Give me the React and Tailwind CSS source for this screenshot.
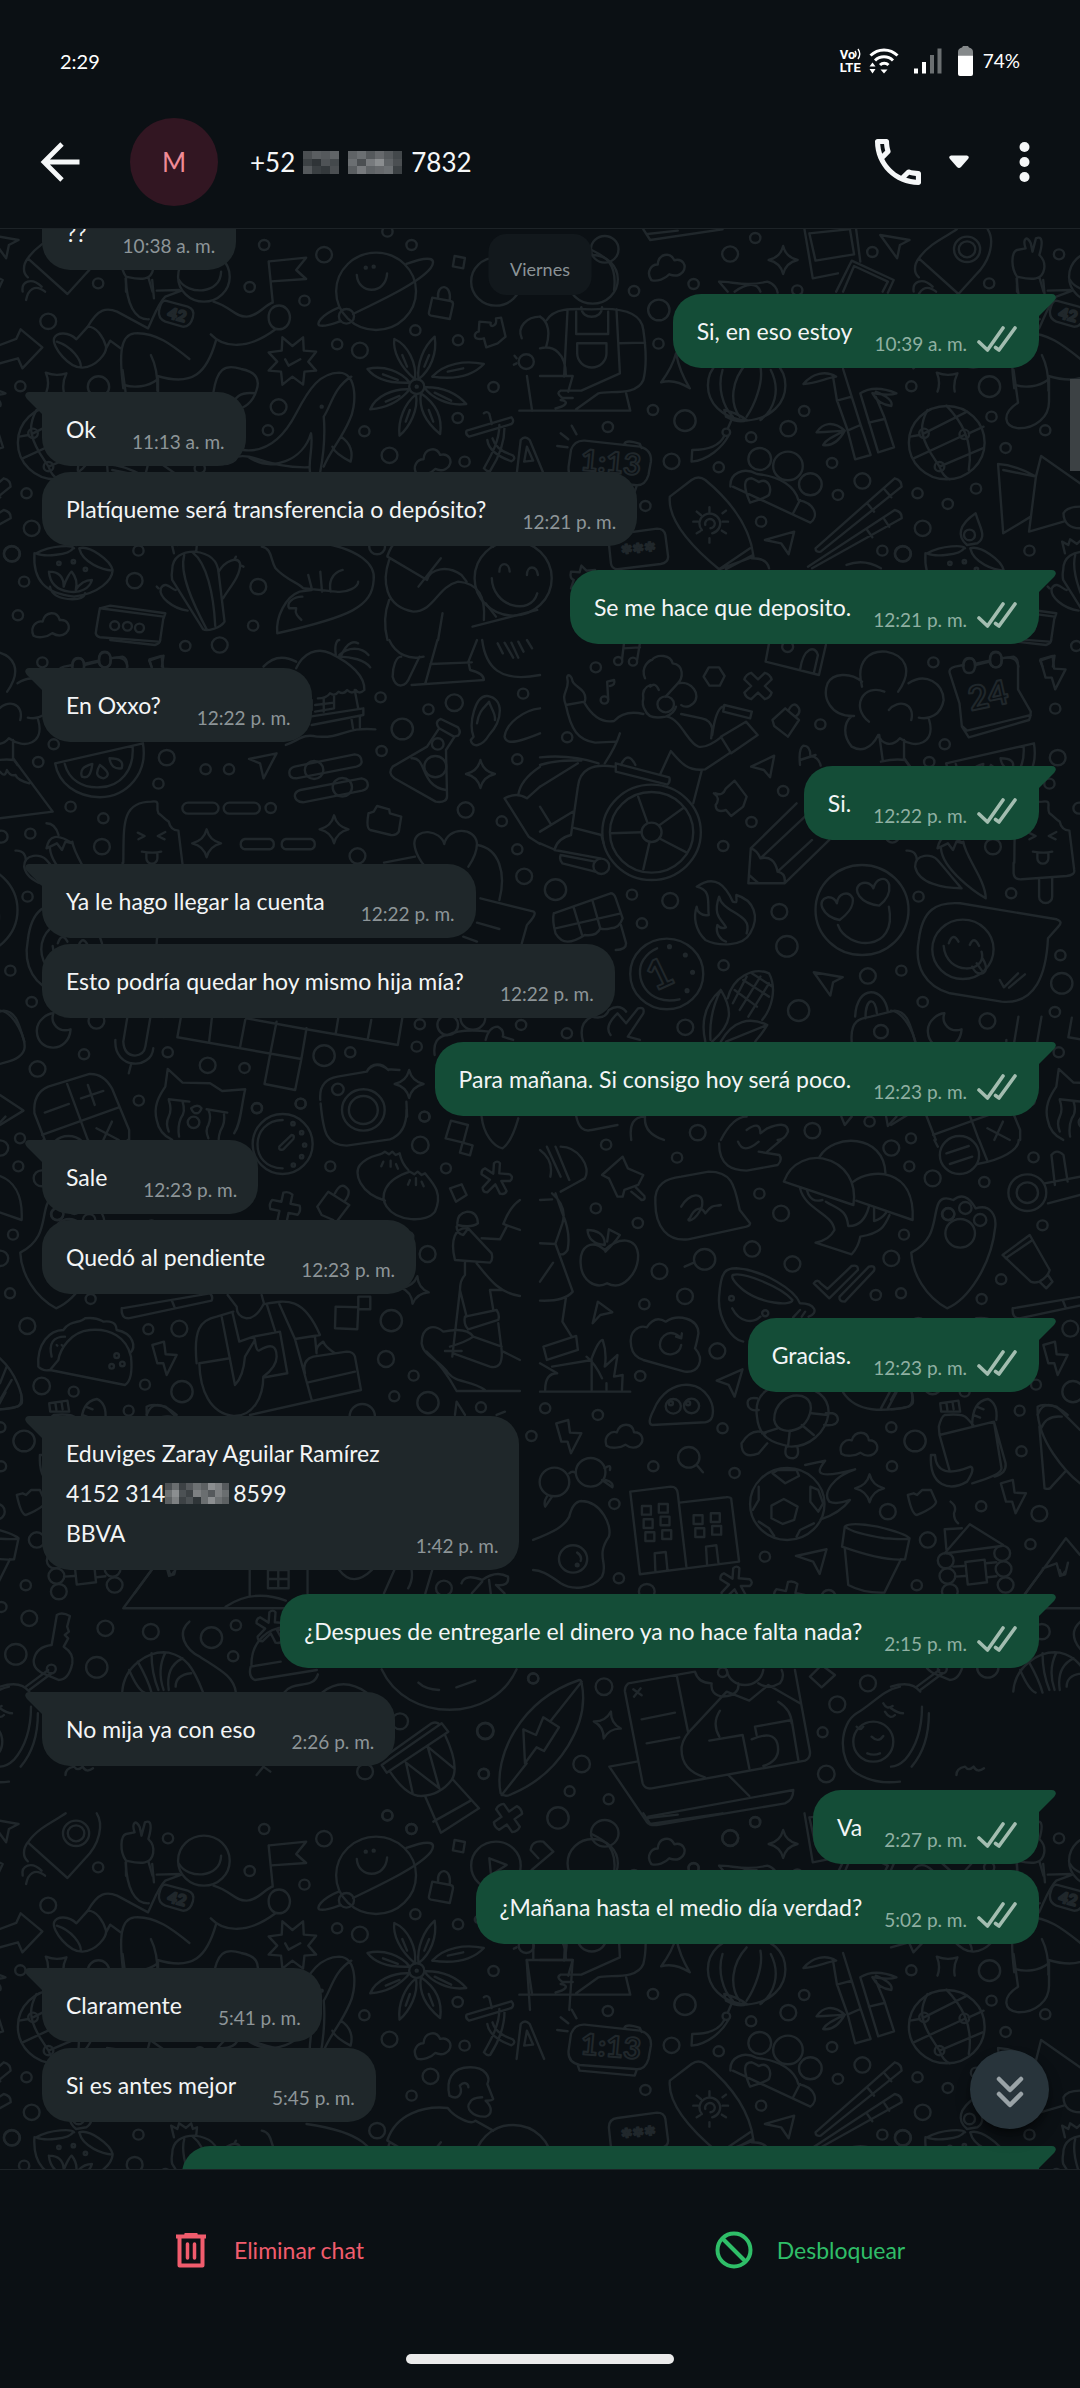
// Small shapes that are scattered over the wallpaper more than once.
const SPARK = 'M0 -42Q8 -8 42 0Q8 8 0 42Q-8 8 -42 0Q-8 -8 0 -42Z';
const BOLT = 'M-35 -40L0 -50L5 -12L38 -10L8 50L-2 15L-20 15Z';
const CLOUD = 'M-50 25C-60 -5 -35 -20 -20 -15C-10 -45 25 -45 30 -15C55 -15 62 10 45 25C30 35 15 30 5 22C-10 32 -35 35 -50 25Z';
const PLUS = 'M-14 -42q14 -8 28 0V-14H42q8 14 0 28H14V42q-14 8 -28 0V14H-42q-8 -14 0 -28H-14Z';
const ASTER = 'M-8 -45q10 -10 18 0L8 -15L40 -12q12 10 0 20L14 8L30 38q-5 12 -20 8L-4 18L-28 42q-14 0 -14 -14L-20 4L-45 -12q-2 -14 10 -18L-10 -14Z';

// The wallpaper tile is split in sheets; every sheet has its own origin and unit.
const SHEETS = [
  {
    transform: 'translate(0 220) scale(.3444 .3333)',
    circles: [
      [767, 75], [1125, 35], [1195, 75], [941, 104, 23], [285, 190], [725, 201], [884, 242], [140, 304, 23], [1206, 331],
      [1330, 361], [979, 373], [1045, 391, 23], [59, 499], [286, 500, 31], [809, 561, 23], [778, 631], [1433, 501],
      [1329, 594], [1058, 634], [1131, 706, 23], [1349, 725], [77, 820], [92, 925, 23], [35, 1002, 23], [402, 992],
      [391, 1082, 23], [70, 1085], [750, 1100, 23], [52, 1186], [735, 1217], [1095, 980, 23], [580, 745],
      [1092, 214, 116], [1006, 289, 22], [1062, 143, 3], [1085, 140, 3], [592, 170, 75], [1210, 500, 22], [1210, 500, 3],
      [934, 560, 3], [171, 1030, 5], [213, 1025, 5], [248, 1048, 5], [1490, 1075, 112], [333, 1217, 13], [370, 1219, 13],
      [405, 1224, 13], [1440, 185, 72], [1528, 425, 22], [1250, 817, 23], [1195, 875],
    ],
    paths: [
      'M1180 132C1250 105 1270 115 1250 145C1220 185 1120 235 1025 282M985 262C930 285 915 315 930 317C950 320 970 310 990 303M1036 165C1040 225 1120 225 1124 160',
      'M782 124L889 113L860 150L889 177L788 184M780 124L792 248M780 292C780 245 840 245 842 292C840 340 780 340 780 292',
      'M520 180C545 225 640 225 642 155M365 175C368 250 390 300 432 298M442 180L447 235M255 320C285 265 310 262 340 275L430 325C450 280 460 250 480 230L527 212M455 212L520 210M620 245C670 260 680 290 715 290C745 290 765 260 790 248M612 343C650 385 720 390 800 328',
      'M358 505C345 400 350 345 390 340C450 335 500 375 550 417M438 405C455 440 458 480 457 512M457 468C560 500 600 460 627 362M360 495C390 505 430 500 455 480',
      'M255 320L222 358C200 335 165 335 157 355C150 380 200 445 240 443C280 440 310 400 308 380C300 350 280 320 255 320M165 365C210 380 235 420 235 440M308 385L320 362L350 385',
      'M480 242L545 260Q567 268 560 292Q552 322 530 320L480 305Q458 295 462 270Q468 242 480 242Z',
      'M0 375L47 357L60 328L123 382L65 445L52 415L0 430',
      'M1255 233L1308 243Q1317 245 1315 255L1306 297L1252 287Q1243 285 1246 275ZM1272 232C1268 190 1312 190 1306 240',
      'M1320 108L1350 114L1345 145L1315 139ZM1392 305L1425 308C1420 325 1445 320 1440 295L1455 293L1468 350L1445 370L1412 382L1405 355C1370 365 1375 335 1390 335Z',
      'M820 352L849 378L880 352L882 392L918 395L895 425L918 452L884 455L880 494L849 470L820 494L816 455L780 452L805 425L780 397L818 392ZM828 418L838 437L872 418',
      'M1205 478C1160 440 1140 390 1145 357C1185 375 1210 430 1205 478M1215 478C1210 430 1230 380 1262 350C1270 400 1250 450 1215 478M1255 470C1290 430 1350 420 1405 432C1370 470 1320 480 1255 470M1232 502C1290 500 1330 525 1354 552C1300 560 1250 530 1232 502',
      'M1222 520C1265 550 1285 590 1278 642C1240 610 1215 570 1222 520M1208 523C1215 570 1190 620 1160 647C1155 600 1175 550 1208 523M1190 508C1160 545 1120 565 1075 568C1090 530 1140 505 1190 508M1190 488C1150 490 1095 485 1067 447C1115 435 1165 455 1190 488',
      'M1168 405L1182 440M1246 405L1232 440M1300 455L1345 445M1262 518L1310 542M1245 570L1258 605M1190 570L1178 605M1120 545L1160 528M1112 463L1155 480',
      'M133 458Q162 470 193 460Q180 487 185 515M133 458Q145 487 135 515M620 515C630 450 650 430 700 447C745 455 755 480 745 510C735 545 710 570 665 573M675 570C675 530 700 515 740 520',
      'M705 690C780 700 830 640 860 580C900 500 930 460 985 458C1040 460 1035 560 1015 600C990 660 960 690 940 740M1020 470C970 500 960 560 940 590C945 650 940 700 930 755M685 605C710 620 715 655 705 690C690 685 660 695 632 732C660 735 680 730 690 710C740 700 780 745 895 742M720 710C790 760 880 720 903 640C910 680 895 720 900 755M990 650C1020 670 1025 700 1018 725C990 710 970 695 965 680M685 605C680 650 665 660 670 690',
      'M1355 632L1485 592q10 12 0 20L1362 650q-12 -8 -7 -18M1405 580q10 -8 16 2L1428 612M1450 615C1450 660 1430 700 1405 745q10 12 18 8C1450 710 1465 670 1465 620M1415 660q5 40 70 64q14 -8 4 -18Q1440 690 1430 655M1500 765L1512 660q12 -15 26 0L1580 765M1522 725L1548 722L1530 680Z',
      'M105 1000C150 975 210 975 215 985M100 1000C95 1080 130 1120 215 1130C290 1120 325 1080 327 1052C300 1050 240 1030 230 985M230 985C260 975 320 1020 327 1050M105 1000C130 1012 200 1005 212 985M142 1055C170 1055 185 1070 185 1100C190 1080 205 1055 208 1055C220 1070 225 1090 220 1110C235 1085 255 1080 267 1080C260 1105 235 1120 200 1115C165 1110 145 1090 142 1055M145 1100C150 1125 170 1137 210 1138C235 1138 245 1130 247 1120',
      'M500 1050C500 1010 530 995 565 995C610 1000 632 1020 635 1060L652 1205C640 1225 600 1235 590 1228L500 1080C498 1070 498 1060 500 1050M535 1005C520 1060 560 1150 600 1228M560 998C600 1030 620 1120 625 1218M545 1172C500 1165 460 1130 467 1105C480 1080 500 1110 510 1110M635 1055C655 1020 690 1010 697 1030C700 1070 660 1110 648 1135M680 1020l5 -10M697 1035l10 5M460 1105l-5 -5M505 1000L497 965L515 975L520 958L540 972L555 958L560 975L572 970L570 992',
      'M760 980C790 985 785 1020 800 1045C830 1080 870 1090 880 1105L975 1115C1010 1120 1040 1100 1040 1085M890 960C1060 985 1090 1040 1085 1080C1080 1160 1020 1190 805 1240C800 1190 830 1130 870 1115L905 1110M895 1065L905 1105M930 1055L935 1115M995 1050C960 1060 955 1090 960 1115M878 1130C850 1130 830 1150 840 1165L860 1165C855 1180 865 1190 875 1200',
      'M1125 1010L1240 1080C1250 1045 1300 1035 1340 1065L1355 1085M1130 1020C1110 1080 1115 1160 1200 1175C1260 1175 1270 1100 1330 1085C1390 1090 1410 1130 1405 1200M1280 1015L1215 1100M1130 1140C1115 1180 1115 1220 1125 1260M1285 1180L1272 1260',
      'M1305 875C1295 830 1310 790 1365 790C1410 790 1425 820 1415 840L1432 885C1430 890 1415 890 1410 890C1430 910 1430 930 1410 938C1370 940 1350 910 1365 895C1370 880 1400 880 1400 880M1305 875C1330 890 1345 870 1335 845C1350 830 1360 840 1360 850M1125 1008C1150 930 1230 905 1300 912M1300 912C1320 940 1370 965 1380 950L1432 980',
      'M1428 1075C1430 1160 1540 1190 1560 1120M1450 1055C1450 1025 1478 1025 1480 1055M1530 1065c0 -30 28 -30 32 0M1372 1220L1560 1170M1410 1150L1440 1190',
      'M290 1165L475 1190L465 1260M290 1165Q282 1210 278 1240Q280 1250 290 1252L460 1265M290 1165L320 1157L480 1180L475 1195',
      'M1515 355C1500 320 1530 290 1568 290M1530 468L1545 572M1500 415l-6 -8M1500 430l-8 4',
    ],
    stamps: [[CLOUD, 1253, 727, -15], [CLOUD, 145, 1218, -5]],
    labels: [['42', 510, 300, 46, 15]],
  },
  {
    transform: 'translate(540 220) scale(.3444 .3333)',
    circles: [
      [625, 54], [552, 102, 23], [446, 192], [273, 213], [747, 211], [965, 96], [345, 270, 31], [344, 371], [328, 570],
      [421, 602, 31], [767, 573], [197, 621], [613, 652], [721, 626, 23], [382, 724, 23], [519, 742], [848, 729],
      [936, 783, 23], [865, 825], [642, 905], [306, 858], [994, 992], [1053, 1001, 23], [1311, 590], [1352, 684],
      [1467, 631], [1266, 806], [1184, 852], [1507, 103], [1240, 88, 38], [1240, 88, 24], [188, 88, 40], [153, 178, 73],
      [541, 637, 11], [1181, 668, 110], [1115, 640, 14], [1232, 643, 14], [1160, 740, 14], [638, 717, 33], [720, 738, 43],
      [785, 793, 33], [1247, 945, 16],
    ],
    paths: [
      'M1100 115L1215 222L1265 165C1310 120 1320 60 1300 28M1100 115C1130 70 1180 50 1210 28M1100 115C1085 135 1085 160 1100 172M1085 215C1080 185 1110 170 1140 200M1095 240C1100 210 1120 190 1150 215',
      'M1385 170C1365 140 1370 95 1385 90L1410 85C1400 55 1415 45 1425 70L1430 95L1440 55C1460 45 1460 70 1450 105C1475 130 1465 170 1440 175C1420 180 1395 172 1385 170M1385 175V215M1450 172L1462 215',
      'M988 45L1073 60L1045 75L1037 115ZM352 487Q385 440 395 400Q405 455 435 505Q390 475 352 487',
      'M768 28L792 175L865 160M782 40L895 28M782 40L800 122L912 103L900 28M918 28L930 125M860 215L905 122L1027 180L1010 218M880 215L912 138L1010 185L995 215M300 28L320 60L530 28M312 42L400 32',
      'M520 185C560 185 600 200 660 185C680 190 690 210 690 218M520 185L545 215M565 215C600 190 630 185 640 215',
      'M150 90C190 110 225 130 215 210M120 262C120 300 180 300 180 262M20 300C40 265 90 265 150 268C230 262 295 275 300 330C310 400 310 440 300 480C280 530 200 510 170 520L105 568M80 270L70 470M105 275V342H198V275M222 268L232 460L120 512H60q-15 8 5 22h30M108 370h85v30a42 42 0 0 1 -85 0zM230 370L305 368M0 468H95L82 515M-60 572H262L250 520M60 540C90 545 70 560 45 565M0 385C40 375 75 400 75 465M0 290c25 15 30 50 18 90',
      'M600 398C450 400 450 590 600 602C750 590 750 400 600 398M530 450C515 500 530 560 560 590M600 430C555 480 550 550 580 590M640 440C650 490 620 560 600 590M670 450C700 510 680 570 640 600M535 570q40 10 65 30q-20 12 -60 -10zM556 600L545 626M535 648C520 680 480 690 442 690L440 725C490 720 530 680 547 648',
      'M850 465L862 540L893 630L915 718L960 705L930 612L905 530L880 447M862 542L905 530M893 632L930 615M765 492C790 460 830 450 860 470C830 475 800 490 765 492M930 520L955 605L982 697L1028 682L1000 592L975 530M955 608L1000 597M930 520C960 500 1000 505 1035 520C1010 530 985 520 965 520M975 515C1010 530 1025 545 1020 558C995 555 975 540 965 520M885 632C850 600 820 610 803 637C830 635 860 635 885 632C850 650 830 660 822 675C850 680 870 660 885 632',
      'M1115 640L1240 575M1160 740L1285 685M1085 715L1232 645M1125 570C1105 610 1100 640 1135 700L1160 740M1180 557C1220 600 1260 660 1245 750M1075 650L1102 645M1245 640L1288 620M1160 740Q1170 770 1190 778',
      'M1375 450L1388 548C1340 580 1345 620 1390 625C1440 625 1478 590 1478 545V475',
      'M1330 732L1345 940L1425 890M1345 750L1440 770L1420 935L1520 905M1440 770L1455 708L1568 790M1330 732Q1380 735 1440 770M1520 880c0 30 20 45 48 45M1520 880q10 -20 48 -20',
      'M130 662L290 680Q325 690 322 725L315 765Q305 800 275 795L115 783Q80 775 83 740L90 690Q100 660 130 662ZM110 785L115 800L275 815L280 800M245 672q5 -15 45 0l5 12M60 640L82 658M92 617L106 643M50 678L80 682',
      'M553 800C550 760 590 740 630 762C700 770 740 800 750 840C800 850 810 890 785 908L560 800M735 880L755 840M610 848C590 800 590 775 615 775C630 780 635 790 638 785C660 775 675 800 665 825C655 835 630 840 610 848',
      'M377 830L440 780Q460 765 480 780C550 840 610 920 620 1010L520 1048C440 980 370 900 377 830M520 1048L610 985M540 1048L618 1005M615 1015q45 0 50 30M480 915a14 14 0 1 1 15 10M470 930a30 30 0 1 1 30 10M492 862V875M492 955v13M445 905h14M530 905h16M455 875l12 10M530 880l10 -8M455 940l10 -6M528 932l12 8',
      'M653 960L738 935L722 1003L700 970ZM1030 775Q1050 780 1050 800L815 995Q800 998 800 985ZM950 850L970 875M1000 808L1020 832M1050 895L790 1045M1050 895Q1052 875 1030 870L778 1040M950 930l15 22M1000 898l14 22',
      'M1240 975C1210 950 1215 915 1265 880C1275 920 1300 950 1270 970ZM890 1035q50 -20 100 10',
      'M225 942L340 926Q360 926 364 945L372 1010Q372 1028 350 1032L225 1048Q208 1046 206 1030L200 970Q200 945 225 942ZM120 1037l15 15l25 -2M120 1037l-5 20l-25 -2q-5 20 8 25l-8 25l20 2',
    ],
    stamps: [[CLOUD, 365, 143, -15], [SPARK, 706, 120, 0]],
    labels: [['1:13', 203, 758, 88, 5], ['***', 290, 1030, 80, -6]],
  },
  {
    transform: 'translate(0 640) scale(.3444 .3333)',
    circles: [
      [538, 18], [638, 15, 23], [123, 67], [156, 313], [111, 366], [484, 353, 23], [460, 431], [205, 500], [300, 535],
      [88, 581], [296, 620, 23], [597, 388], [665, 388], [786, 504], [1105, 172], [1168, 267, 31], [1108, 333], [1244, 208],
      [1319, 188, 25], [1519, 161], [1502, 358], [1352, 510, 23], [1457, 544], [1502, 628], [1522, 709, 23], [1038, 648, 23],
      [80, 770], [30, 992], [92, 1086], [280, 1143, 23], [244, 1243], [109, 1287, 23], [487, 1237], [603, 1276, 23],
      [710, 1284], [941, 1247, 31], [1017, 1237], [1219, 1153], [1210, 1220], [1300, 1155, 30], [1513, 1155], [403, 1382],
      [746, 1405], [873, 1391], [981, 1348, 17], [1233, 1430], [4, 590, 18], [912, 390, 27], [994, 442, 28], [1271, 312, 17],
      [1264, 380, 32], [562, 1447, 17], [1055, 1410, 62], [1055, 1410, 42], [1373, 1133, 36],
    ],
    paths: [
      'M160 370L415 310C430 400 370 470 290 472C220 470 170 430 160 370M188 372C200 420 240 445 290 442C350 440 390 390 385 320M268 372q-40 10 -30 38q25 10 30 -38M290 375q-20 35 10 40q30 -10 -10 -40M318 355q5 35 35 30q10 -30 -35 -30',
      'M723 357L803 340L765 415L755 370ZM855 380L1030 343Q1050 345 1050 365Q1050 375 1035 380L860 415Q840 415 840 398Q840 385 855 380ZM872 450L1050 415Q1068 418 1068 435Q1068 447 1052 452L880 487Q858 485 856 468Q856 455 872 450Z',
      'M546 488h72a16 16 0 0 1 0 33h-72a16 16 0 0 1 0 -33zM666 488h72a16 16 0 0 1 0 33h-72a16 16 0 0 1 0 -33zM711 597h72a16 16 0 0 1 0 31h-72a16 16 0 0 1 0 -31zM830 597h72a16 16 0 0 1 0 31h-72a16 16 0 0 1 0 -31z',
      'M358 668C360 560 350 485 440 485C470 480 450 500 460 520C475 530 480 540 490 545C495 570 510 570 518 572L532 690Q535 705 510 708L380 718Q358 720 356 700V668M400 578l20 10l-18 10M480 576l-22 12l20 10M412 635C440 640 450 640 468 635M425 640V655a16 16 0 0 0 32 0V640M430 720V770a19 19 0 0 0 38 0V715',
      'M135 550q25 0 35 35M135 625q10 -60 75 -15l-20 -5l-10 25l-15 -20zM45 632C70 630 75 650 75 660M70 680C70 640 120 640 135 660C160 690 200 740 205 745C150 745 80 730 70 680M145 625C150 690 250 760 275 775C275 720 215 650 210 605',
      'M765 80q40 -45 95 -15M860 85C880 40 920 20 960 40C1020 70 1060 110 1058 150q-15 15 -25 0q-10 15 -25 0q-10 15 -25 5q-10 15 -25 5q-10 15 -35 15M975 45C970 10 980 0 985 0M985 45C1010 20 1050 20 1070 45M985 50C1020 50 1060 60 1075 82M990 48C1010 0 1030 5 1040 10M905 180V210M915 215L970 205V165M1030 150L1040 205M900 230L1055 205L1055 225L905 255M1020 232L1025 265M1045 230V262M830 315C870 300 880 280 920 290C1000 295 1000 260 1090 268M940 175V215M915 195L970 188',
      'M1275 265q-15 -20 5 -28L1330 262q10 15 0 25L1318 290ZM1275 265L1240 320L1140 380Q1125 400 1145 415L1265 485Q1300 490 1298 465L1295 330L1320 290M1195 355C1240 350 1220 440 1295 450',
      'M1375 290C1360 250 1380 165 1415 168C1465 175 1460 240 1420 285C1400 320 1370 325 1367 300zM1385 250C1390 210 1410 200 1420 185C1425 205 1440 220 1437 240M1465 290C1470 250 1520 210 1568 205M1465 290C1470 320 1520 300 1568 280',
      'M1070 520L1085 515L1095 498L1130 508L1132 520L1165 530L1158 575Q1150 588 1135 585L1075 570Q1062 565 1070 520M1290 612C1300 560 1380 560 1385 610C1385 640 1370 665 1360 680M1290 612C1280 570 1205 560 1203 610C1205 640 1225 670 1235 680M1385 615C1450 625 1470 700 1450 780M1115 668L1205 650M1395 775L1550 815Q1560 822 1530 855L1515 910M1385 848L1450 867M1345 890L1385 905',
      'M1465 475L1535 590L1568 612M1465 475Q1500 455 1530 475L1568 440M1505 465Q1510 420 1568 380M38 355L153 515L0 535M0 395q15 20 20 -5q10 20 25 15q5 15 40 25',
      'M155 1120C145 1150 170 1180 205 1168C200 1240 110 1240 107 1175C105 1140 140 1120 155 1120M370 1130L358 1205Q360 1245 392 1247Q418 1245 422 1220L437 1130M335 1200C330 1290 440 1290 445 1225M380 1275L374 1300',
      'M525 1133L515 1192L875 1257L857 1350L768 1332L785 1240M615 1135L607 1207M712 1140L697 1222M803 1145L785 1240M890 1165L875 1257M715 1135L890 1168L1155 1215L1168 1135M982 1135L975 1180M1078 1140L1068 1197',
      'M100 1420Q95 1360 140 1340L260 1302Q300 1300 325 1345L375 1470V1500M100 1420L130 1500M195 1332L255 1500M122 1485L345 1402M130 1418L200 1392M255 1335L275 1395M235 1375L300 1353M280 1465L345 1500M325 1445L300 1500',
      'M455 1440C445 1400 460 1370 480 1340L487 1287L530 1328L610 1330L645 1353L712 1348C700 1400 700 1450 680 1480M455 1440C460 1470 480 1490 500 1500M490 1378L550 1385M600 1408L660 1418M490 1380q10 30 0 50q-10 20 0 45M530 1385q10 30 -5 50q-10 25 -5 55M605 1410q10 20 0 45q-10 15 0 40M650 1418q5 30 -10 55q-5 15 -5 25M555 1405q20 -15 30 0q-5 15 -15 15q-10 0 -15 -15',
      'M930 1380Q925 1320 980 1310L1065 1295C1080 1265 1110 1270 1125 1288L1160 1290M1180 1385L1182 1430M1068 1290q25 -30 60 0M0 1365L68 1412L0 1455M0 1112C40 1115 80 1200 70 1230C60 1260 20 1265 0 1272',
      'M320 0L450 15Q465 10 465 0M210 80q0 -25 20 -25q15 0 15 25M287 60q0 -25 17 -25q17 0 17 25q0 22 -17 22q-17 0 -17 -22M245 75L287 65M320 55q45 -10 50 25M433 62L475 47L470 80M433 62L440 80',
      'M1130 0C1150 45 1190 60 1230 50M1140 110C1140 80 1150 50 1165 50M1140 110C1150 150 1180 140 1190 110L1218 50M1195 135L1380 122L1405 120Q1405 100 1365 90L1360 65L1385 0M1235 130L1270 0M1250 72L1370 67M1400 0C1410 80 1450 130 1568 105M1445 10l15 30M1465 8l25 45M1485 8l20 45M1505 5l15 30M1530 0l15 25',
      'M1262 1245Q1255 1190 1300 1185Q1340 1165 1420 1175M1410 1200Q1420 1160 1445 1160Q1465 1170 1460 1190L1490 1200',
    ],
    stamps: [[SPARK, 600, 610, 0], [SPARK, 970, 568, 0], [SPARK, 1395, 402, 0], [SPARK, 1188, 1332, 0]],
    labels: [],
  },
  {
    transform: 'translate(540 640) scale(.3444 .3333)',
    circles: [
      [162, 82], [79, 292], [814, 253], [1496, 206], [706, 453], [614, 546], [532, 618], [45, 749, 31], [267, 764],
      [378, 782, 23], [296, 850], [695, 815, 23], [717, 919, 31], [533, 976], [952, 1008, 23], [751, 1112, 31],
      [422, 1162, 23], [78, 1180], [1368, 760], [1511, 946], [1515, 1030, 31], [1495, 1116], [458, 1478, 23],
      [791, 1472, 23], [957, 1445], [187, 180, 11], [227, 63, 12], [270, 65, 12], [365, 193, 24], [324, 577, 143],
      [324, 577, 121], [324, 577, 29], [178, 679, 23], [935, 810, 135], [1228, 928, 89], [368, 1002, 106], [376, 920, 4],
      [422, 945, 4], [443, 997, 4], [427, 1052, 4], [990, 1175, 20], [719, 20, 16],
    ],
    paths: [
      'M490 82L520 82L536 108L522 137L492 137L475 110ZM198 178L195 125L215 120q5 15 -12 18M238 60L245 0M282 60L290 10M242 25L290 22',
      'M305 115C290 80 320 60 325 60C340 40 380 45 385 70C420 75 415 115 400 130L365 170M400 130C440 120 470 165 445 190C430 205 415 200 410 195M320 135q-25 10 -20 40q-5 20 5 35q10 30 60 20q25 -10 30 -30M345 150q-10 -25 -25 -10',
      'M75 195C90 270 110 300 160 308L220 305M130 190C150 225 175 250 215 243C240 215 270 215 300 222M232 280Q220 320 188 370M75 195L130 185C140 150 100 140 95 125C90 100 75 100 80 120C85 150 60 160 75 195M410 222L470 235Q495 240 500 265L497 295M370 230C410 240 430 310 460 320C480 325 510 305 525 292M348 405L380 333C410 370 430 395 480 388L550 340M470 390L445 490M525 290L598 245L632 285L555 340zM500 285Q510 210 530 200M535 195l80 20l-5 20l-78 -20z',
      'M220 370L375 412q5 12 -5 22L220 395zM235 375q20 -45 42 0M285 470L312 548M415 505L345 557M205 580L295 577M425 637L350 597M300 688L318 607M215 380C150 370 115 390 110 440L90 585Q50 595 42 630L175 655M95 563L178 585L185 610M60 645L160 665M65 670L160 695M60 645q-5 15 5 25M0 352C60 345 110 350 170 370M0 375C30 365 80 360 120 362M0 440L110 370M0 500L30 550M0 575L95 515M0 610L45 630',
      'M675 240L712 205L752 240L720 290L680 258ZM722 210q15 -30 30 -5q5 15 -10 25M613 380L680 347L668 412L650 390ZM510 460q20 10 30 -15L565 422L600 470L590 500L555 528L540 510q-30 10 -30 -15q15 -20 -5 -35M755 375q-5 -50 10 -58q20 0 20 30q25 5 30 30M755 360L800 345',
      'M935 140C915 60 960 30 1005 35C1060 45 1085 90 1040 155M1070 130C1120 95 1170 130 1172 180C1165 225 1130 240 1100 233M1130 240C1150 310 1090 330 1045 295C1020 325 990 310 982 285C960 330 930 335 905 320C880 290 880 250 905 228M912 228C840 230 820 170 835 130C850 100 900 95 935 125M955 245C900 200 940 130 1000 155M1013 210C1040 175 1090 190 1078 240M985 285L995 360M1057 300V360M990 365Q1030 355 1060 360L1070 375',
      'M665 10L655 65L810 105L830 15M755 90C765 20 800 15 807 45L795 100M1190 100Q1185 85 1205 80L1230 75M1262 72L1305 62M1340 55L1375 50Q1388 55 1388 75V148L1425 215Q1425 230 1420 240L1245 292L1225 260L1218 190L1190 100M1425 225L1240 272L1225 258M1229 77q0 -23 17 -23q17 0 17 23q0 22 -17 22q-17 0 -17 -22M1307 60q0 -23 17 -23q17 0 17 23q0 22 -17 22q-17 0 -17 -22',
      'M745 490L612 625L605 730L710 730L840 600M640 655L790 510M612 625Q630 630 640 655Q680 645 690 695Q715 700 710 730M690 695L790 600M607 705L635 730',
      'M455 740C500 750 485 790 490 825C470 830 455 815 455 800C445 830 450 870 480 900C520 920 590 920 610 880C640 830 620 780 570 765C570 785 575 790 560 785C540 740 510 700 455 740ZM520 770C500 830 530 840 540 862C525 868 518 860 515 855C508 880 525 900 540 905M520 770C530 820 620 820 600 880',
      'M870 840C820 830 800 780 835 772C855 770 860 785 862 790C865 760 895 750 908 775C912 800 890 825 870 840ZM985 797C930 790 905 750 930 732C950 722 965 735 968 745C975 715 1005 705 1014 735C1018 765 1000 785 985 797ZM865 855C890 930 1040 940 1013 800',
      'M1220 790L1500 838Q1520 845 1505 860L1475 895C1470 1000 1440 1095 1340 1085L1190 1060C1120 1040 1085 980 1100 900C1110 810 1150 785 1220 790ZM1172 918C1180 1010 1300 1000 1282 935M1187 910q12 -35 28 -5M1248 915q12 -30 27 3M1255 980q10 25 30 20q20 -10 0 -45M1268 970l15 22M1335 1020l12 22L1388 1000M1362 1043L1408 1003',
      'M40 820L205 760Q215 760 220 775L240 835M40 820Q35 840 45 880Q60 905 80 905M45 865L235 820M97 800L122 885M152 780L175 865M240 835q-10 30 -35 30q-20 5 -30 0q-10 25 -45 20q-30 20 -50 20M235 855L250 910Q250 930 220 930M405 1078C310 1100 270 1010 300 960Q315 935 340 925',
      'M545 1075C560 1010 620 980 665 1000C690 1050 670 1110 645 1140M565 1050L630 1100M590 1020L665 1070M615 1000L675 1040M560 1090L600 1010M580 1110L640 1010M605 1130L665 1030M525 1050C470 1100 470 1160 480 1205M525 1050C560 1110 560 1150 500 1205M525 1050Q490 1120 495 1200M525 1205C560 1140 610 1130 660 1155C640 1190 630 1195 625 1205M540 1205L660 1155',
      'M795 997L879 1012L851 1027L843 1067ZM915 1130C920 1030 1000 1040 1010 1115M945 1135C945 1070 975 1070 978 1120M905 1205C900 1140 930 1135 960 1130L1030 1112C1070 1115 1075 1160 1090 1205',
      'M125 1205Q110 1150 150 1130Q190 1140 200 1110Q230 1090 250 1115M205 1185Q185 1160 225 1120L250 1150M250 1150L285 1105Q305 1100 300 1120L255 1190L290 1200M105 1428Q115 1480 150 1470L225 1455M265 1500Q255 1430 305 1430Q300 1480 360 1500M525 1500Q560 1430 600 1430M600 1470Q640 1440 640 1480L660 1465Q720 1440 720 1475Q710 1500 690 1500M875 1430L885 1455L905 1430M1005 1430L1010 1458L1035 1430',
    ],
    stamps: [[PLUS, 633, 138, 45], [BOLT, 1488, 98, 0]],
    labels: [['24', 1308, 200, 100, -12], ['1', 365, 1040, 120, -25]],
  },
  {
    transform: 'translate(0 1090) scale(.3333)',
    circles: [
      [771, 54], [902, 41], [1273, 80], [1261, 165, 25], [991, 229], [1338, 235], [60, 145], [55, 229], [125, 265, 24],
      [39, 434], [30, 610], [272, 627], [172, 373, 18], [82, 708, 24], [445, 718], [538, 716, 24], [125, 888, 25],
      [221, 905], [435, 884], [546, 905, 32], [386, 962], [1225, 441], [1283, 492, 24], [1174, 692, 32], [1158, 807, 24],
      [1241, 857], [1183, 919], [1284, 938, 32], [1443, 952], [1087, 980, 38], [848, 162, 90], [879, 101, 5], [905, 128, 5],
      [914, 165, 5], [905, 200, 5], [880, 225, 5], [350, 797, 7], [335, 829, 7], [367, 822, 7],
    ],
    paths: [
      'M848 90C750 90 745 235 848 235M838 170L875 135q10 0 5 12L850 178q-15 5 -12 -8M962 40C970 130 980 165 1040 167L1170 148Q1220 130 1220 60',
      'M1155 332C1080 310 1060 250 1080 225C1110 190 1140 200 1155 185l12 8l10 -8l10 10l12 -5Q1205 220 1225 240M1230 245C1150 270 1140 320 1160 350C1190 395 1280 400 1305 365C1330 310 1300 280 1275 250l-10 5l-12 -10l-10 8zM1150 215l-6 14M1172 212v18M1188 222l6 14M1230 270l-6 14M1248 265v20M1265 275l6 14',
      'M952 350L985 305L1048 345L1010 395M952 350L965 375L1000 390M1005 310q20 -40 40 -10q5 15 -12 35M1353 92L1404 105L1390 158L1337 145ZM1388 158L1418 166L1410 196L1380 188ZM1350 295L1385 283L1400 315L1368 335ZM1007 650L1075 652L1072 718L1005 715ZM1075 620H1111V658H1075ZM1445 80C1450 130 1480 170 1508 175C1530 160 1545 120 1555 85',
      'M365 655L630 610q10 10 5 22L385 685q-22 0 -20 -30M515 630L525 655',
      'M115 830C110 760 150 720 190 720C210 690 240 700 255 685C290 680 300 690 310 695C350 690 350 715 350 720C400 730 410 770 390 790M150 840L375 885Q400 870 393 800C380 740 330 715 270 720C210 725 180 780 175 810L150 840M115 830Q130 845 150 840M155 800C145 760 160 740 195 740M170 765l2 2M185 765l2 2',
      'M590 820C580 720 600 690 650 680L700 665M665 680L705 885Q730 860 735 800L765 750L760 740L840 725L862 850L795 862M765 752Q770 790 780 780Q830 750 830 800Q830 830 790 860C790 920 760 980 700 978C630 970 600 900 598 820L690 805M698 670L718 755L760 740M683 615L710 650M785 615L792 640Q770 685 740 685Q710 680 710 650M800 642L825 722M795 642C860 630 910 620 960 735L885 747L838 642M885 747L935 930M945 740L950 790Q945 770 970 755Q975 770 1005 790M915 850Q905 810 940 800L1040 785Q1060 785 1065 800L1083 900L750 975M925 877L1065 845',
      'M1365 510C1350 450 1365 410 1405 415L1475 490Q1480 510 1470 518L1365 510M1372 400q0 -30 30 -35q30 0 32 35q-20 15 -62 5M1370 410q0 20 20 25l15 -20M1445 445L1500 448L1520 410M1510 402Q1530 350 1560 330M1560 420L1510 402M1395 518V555Q1380 570 1380 600L1400 680M1430 520C1470 570 1500 610 1560 618M1505 600H1470L1480 660M1395 680L1490 660q10 15 5 30L1405 718q-15 -15 -10 -38M1380 600L1357 800M1335 783h50M1360 790L1470 830Q1510 840 1505 780L1495 700M1420 740L1505 770M1265 760C1265 710 1300 700 1330 725Q1400 710 1420 740Q1400 755 1350 770M1265 760C1270 800 1320 810 1345 850C1370 880 1410 870 1455 900M1280 785Q1330 830 1370 903H1560M1510 785L1560 810',
      'M440 975q20 -60 90 0M1365 975L1370 935L1395 975M1490 975l25 -10M0 805C50 850 70 920 65 940Q55 955 0 958M20 830L0 880M35 870L0 930',
    ],
    stamps: [[PLUS, 855, 352, 12], [ASTER, 1490, 265, 0], [SPARK, 1245, 600, 10], [BOLT, 492, 805, 0]],
    labels: [],
  },
  {
    transform: 'translate(540 1140) scale(.3444 .3333)',
    circles: [
      [192, 14], [398, 53], [162, 205], [284, 249], [637, 161], [700, 220, 23], [478, 358, 31], [616, 327, 23],
      [733, 372, 23], [347, 394, 23], [421, 469, 23], [303, 493], [515, 633, 23], [291, 708], [168, 825], [15, 805],
      [530, 865], [1020, 24, 23], [1290, 126], [1433, 52], [1459, 256], [1339, 418], [1020, 355, 23], [975, 465], [1020, 862],
      [1089, 903, 31], [1022, 979], [1010, 1115, 23], [329, 979], [565, 999], [216, 1092], [229, 1315], [653, 1250],
      [1126, 1200, 23], [1281, 1099], [1094, 1336], [1450, 1121, 23], [1424, 1213], [1398, 934], [310, 1355, 23],
      [838, 1370, 20], [556, 475, 7], [654, 520, 9], [1220, 280, 43], [1185, 222, 18], [1235, 204, 18], [1278, 240, 18],
      [1415, 158, 55], [1415, 158, 31], [1218, 45, 57], [387, 799, 22], [440, 798, 22], [380, 790, 6], [430, 790, 6],
      [42, 1026, 43], [147, 997, 43], [432, 952, 31], [96, 1257, 41], [108, 1275, 4], [718, 1092, 108],
      [1178, 1262, 23], [1342, 1240, 23], [1183, 1308, 23], [1346, 1287, 23], [1190, 1355, 23], [1352, 1335, 23],
    ],
    paths: [
      'M180 105L240 50L255 85L300 105L285 135L245 150L240 170L225 170L200 115ZM265 155L295 180q12 0 8 -12L278 142',
      'M335 190C330 130 370 115 410 110L490 95C560 95 565 140 580 210L610 250Q610 260 590 262L430 298C370 305 335 260 335 190ZM410 200C430 160 480 150 470 200C450 250 420 245 435 235C450 200 470 200 480 220C500 190 510 200 525 195',
      'M708 125C730 60 790 50 820 55C890 70 920 130 910 195ZM812 50C850 -20 1000 -20 1003 100M910 125C960 85 1090 80 1082 240L918 182M755 145C770 210 850 220 855 270Q840 300 800 308L905 343Q925 320 930 290C990 280 1000 260 1015 225M830 185C870 210 890 210 895 258Q940 260 955 200M775 150q10 40 45 30M970 205v38q20 -5 35 -25',
      'M520 10C520 80 560 90 600 92L690 75Q705 60 695 45L635 35M575 5q15 40 60 0M660 35L700 0M420 380L447 368',
      'M188 330C150 295 115 320 118 370C120 420 160 450 195 430C240 455 285 400 285 345C280 290 230 290 188 330M188 315C190 280 160 270 138 270Q140 310 188 315M195 305L200 268L232 285Q220 305 190 335',
      'M520 470C525 390 540 385 570 385C650 390 740 450 755 490C800 490 810 520 780 530M520 470C515 540 560 600 590 605M560 405C590 395 700 440 733 480C730 500 640 490 590 450C560 425 555 410 560 405M558 505C580 550 620 550 640 530M755 510l-20 22M770 515l-10 15',
      'M795 430q10 -15 20 0L835 447L905 378q20 -5 18 12L840 475zM870 470L955 380q20 -5 15 12L885 485q-18 0 -15 -15',
      'M1155 195Q1165 165 1200 180Q1235 150 1265 205C1310 190 1325 230 1322 260C1310 380 1240 480 1182 505C1120 470 1080 400 1078 338C1150 300 1140 240 1155 195Z',
      'M1343 345L1422 285L1480 390Q1475 410 1450 425Q1435 430 1425 425ZM1352 355L1430 300M1450 425L1470 445L1488 425L1475 405M1465 130L1568 110M1475 190L1568 165M1485 45q15 -20 35 0L1532 125M1485 45L1495 135M1180 40l65 -22M1190 72l65 -22M1275 0L1298 60M1270 72C1340 60 1390 30 1390 0M1155 20L1145 0',
      'M513 722L588 688L565 770L548 735ZM168 485L210 517L175 525L153 550ZM265 620C255 570 290 555 310 562C330 530 350 535 365 545C400 520 460 535 460 580Q455 610 450 625C480 660 460 700 420 695L300 660Q270 650 265 620ZM405 590C370 560 340 600 350 625C365 655 405 645 410 615M395 590l15 5l2 -15',
      'M325 855Q310 850 330 810C350 760 390 730 435 735C480 740 510 790 500 830Q495 845 480 847ZM630 830C620 760 670 730 733 735C800 740 840 770 838 820C830 880 780 920 730 920C670 910 635 890 630 830M680 840C680 790 720 760 760 768C800 780 790 830 760 860C720 885 685 870 680 840M690 865L645 880M725 875L720 920M760 855L795 885M788 820L835 825M655 880q-40 -20 -70 30q0 50 50 30l25 -30M630 775q-35 -5 -25 25q10 15 30 10M830 820q35 -5 35 20q-5 20 -40 15M715 920q-10 35 20 35q20 -5 12 -35',
      'M880 757C920 820 1000 815 1070 800Q1085 790 1080 760M990 805L1015 757M1010 805L1035 757M85 1000q8 -8 18 -2M188 985q20 -15 15 5M180 1020l30 22q5 -15 -20 -22M35 1070L15 1100q-5 -15 5 -30M455 975L473 997',
      'M120 1083C180 1085 210 1160 200 1190C160 1250 200 1270 180 1310C150 1350 90 1350 60 1330C20 1300 0 1290 -20 1290M-20 1200C40 1175 70 1160 85 1130Q95 1085 120 1083M108 1238q15 10 10 25',
      'M262 1055L380 1040Q398 1040 400 1060L425 1280M262 1055L290 1303L578 1265L555 1075Q550 1070 540 1072L405 1088M335 1295L333 1240L365 1236L370 1290M485 1272L482 1220L512 1216L518 1268M296 1098h26v26h-26zM345 1092h26v26h-26zM301 1138h26v26h-26zM350 1130h26v26h-26zM306 1177h26v26h-26zM355 1171h26v26h-26zM446 1126h26v26h-26zM496 1120h26v26h-26zM451 1165h26v26h-26zM500 1158h26v26h-26z',
      'M708 1077L748 1100L738 1140L705 1152L672 1135L672 1097ZM675 1000L690 990L745 990L752 1008L712 1030ZM785 1040L808 1050L822 1090L808 1115L785 1085ZM635 1145L665 1165L680 1188M795 1150L755 1170L745 1190M635 1040V1080L618 1110M770 975L828 962C810 985 780 1025 915 988C850 1010 820 1060 840 1085Q860 1095 900 1080Q870 1120 815 1138',
      'M1068 1065L1085 1060L1095 1065L1110 1050L1135 1050L1150 1085Q1150 1100 1095 1125Q1080 1125 1068 1065M1160 885L1158 860Q1165 830 1175 825Q1230 820 1240 835L1258 855M1160 885L1318 845L1340 985Q1340 1005 1255 1030M1160 885L1190 995M1318 845L1352 970Q1355 1000 1320 1010M1165 815L1162 790L1215 782L1220 815ZM1180 790l3 20M1198 788l3 20M1255 855Q1255 785 1300 777Q1330 790 1325 840M1268 800l20 8M1258 825l20 8M1135 945h12C1150 1000 1190 1005 1250 980Q1265 985 1240 1025C1190 1055 1130 1040 1135 945',
      'M743 1248L832 1228L812 1302L793 1265ZM885 1160Q900 1145 980 1160Q1060 1180 1073 1195L1060 1258Q1000 1265 877 1220ZM885 1160Q910 1180 1000 1195Q1060 1200 1073 1195M885 1225L895 1335Q940 1360 1000 1358L1048 1258',
      'M1175 1240L1248 1153L1345 1215M1180 1240L1340 1218M1175 1168l50 -3M1175 1168l5 60M1192 1085q20 15 10 35q0 20 12 30M1200 1280l30 -2M1295 1270l30 -3M1205 1310l30 -2M1300 1312l25 -3M1235 1266l56 -7l7 68l-56 7z',
      'M1445 800Q1460 790 1500 800L1568 870M1445 800C1440 900 1530 1000 1568 1030M1450 860L1465 1045q15 5 20 -5L1525 995M1455 865q15 -40 60 -35M1410 1360L1527 1195L1568 1245M1460 1285l40 -15l10 38l15 -5l8 -35',
      'M60 20C110 20 150 80 130 115L95 135L60 155M0 30Q40 60 30 110M20 20L60 110M45 20L85 120M0 180L35 178M45 160L65 220Q90 280 80 330Q70 345 60 343M35 160Q80 200 65 250L45 310M0 310L45 312L95 455Q70 485 0 482M0 425L38 368M75 475L65 545L92 590M10 620L105 588L110 630L20 660ZM35 680L150 660V750M15 750Q15 700 50 700L0 670M135 650Q160 670 180 715M150 655Q170 600 182 600Q195 640 188 680L225 645L215 710L240 705L238 750M193 730v20M0 755H262',
    ],
    stamps: [[CLOUD, 243, 892, 0], [CLOUD, 925, 916, 0], [BOLT, 82, 890, 0], [BOLT, 1373, 1070, 0], [SPARK, 957, 1045, 0], [ASTER, 569, 1330, 0], [PLUS, 725, 1370, 12]],
    labels: [],
  },
  {
    transform: 'translate(0 1380) scale(.3444 .3333)',
    circles: [
      [4, 681], [85, 715, 23], [306, 745, 23], [46, 823, 31], [281, 862, 31], [438, 755, 23], [614, 773, 31], [685, 736],
      [677, 829], [1289, 625, 23], [1548, 895], [1409, 1053, 23], [1405, 1181], [1060, 1175, 23], [1543, 168], [149, 867, 13],
    ],
    paths: [
      'M165 705Q180 695 203 708L195 740L200 755L188 765L198 775L185 800Q215 820 210 850Q200 900 170 900L135 885Q95 870 98 840Q105 800 150 795ZM75 920L140 870M85 930L150 880',
      'M355 935C360 860 430 810 490 818C540 830 560 860 590 938M375 870Q400 930 420 938M400 845Q430 900 440 938M440 820Q440 880 460 930M480 818Q455 870 475 930M530 835Q480 860 490 930M555 880Q510 885 510 920M550 725C510 760 540 810 580 830C640 870 680 890 685 938',
      'M730 855C730 780 780 745 830 740M728 860Q720 890 740 900L920 870M728 860L815 845M825 938C850 900 910 930 923 883M935 938q60 -50 130 0M1108 868C1180 1030 1430 1030 1500 868M1215 908q20 20 60 22M1325 922l55 -20',
      'M440 570L358 685H830M490 570q5 25 15 5M655 680q80 -55 175 -18M725 570V645M893 570V640M778 570h60v55h-60zM808 570v55M778 597h60M985 570q40 55 95 0M1145 570L1115 640M1195 570q5 30 -10 55M1255 570L1235 640M1340 610Q1350 580 1400 600Q1440 570 1475 590Q1480 620 1440 615L1465 640M1400 605L1370 640M1420 600L1425 640',
      'M190 1185q0 -20 25 -25q10 15 25 0q10 20 30 5M745 1185l20 -25l20 15M0 985q20 15 35 15M0 920Q60 900 85 935M90 980Q90 1080 40 1140Q20 1160 0 1160M110 1000Q110 1100 60 1160',
    ],
    stamps: [[ASTER, 790, 742, 0]],
    labels: [],
  },
  {
    transform: 'translate(380 1640) scale(.3333)',
    circles: [
      [460, 116], [672, 140, 25], [60, 244, 24], [316, 273, 25], [605, 372, 25], [311, 402], [569, 454], [686, 478],
      [534, 534, 32], [22, 526], [94, 567], [1464, 130, 24], [1372, 193, 24], [1328, 277], [1339, 402, 25], [1125, 547],
      [1051, 594, 24], [941, 685], [1480, 305, 60], [1028, 97, 14],
    ],
    paths: [
      'M5 375L185 250L205 275L20 398ZM0 360L155 250q10 -5 20 0M30 395Q80 470 125 468Q180 465 215 420Q240 380 195 285M78 368L98 460M78 368L178 445L143 320L222 385M135 468L183 578L297 505L220 420M160 545L272 482',
      'M598 120C420 180 340 350 362 460Q375 475 400 460C540 400 630 250 605 130Q604 120 598 120M605 125L510 245M440 370L365 465M435 370L430 268L468 285L490 232L537 262L492 333L470 322Z',
      'M770 365L688 380L800 545Q810 558 830 555L1215 490Q1240 480 1240 450L805 530M945 95L745 130Q733 140 735 155L788 430Q795 448 815 445L1275 362Q1292 355 1290 335L1245 90M890 105L925 280M785 238L885 218M800 310L898 292M760 148l25 18M782 145l-20 25M1045 405L1108 468M975 412Q900 390 905 320Q910 290 940 262L1040 155L1108 182L1165 135L1260 190M1020 212Q995 250 1018 290M988 302L1088 285L1108 385M1115 298Q1180 270 1192 310Q1205 360 1150 378M1130 285L1125 260L1235 240L1255 360M1195 185Q1235 210 1235 250M1040 90C1050 150 1140 150 1150 90M945 95Q955 130 995 130Q990 165 1030 170Q1080 165 1075 130M1135 130Q1165 150 1200 130Q1215 110 1205 90',
      'M1560 140C1510 150 1480 190 1430 220C1380 250 1370 360 1430 400C1470 425 1520 430 1560 425M1462 340q20 8 38 0M1475 290q20 20 35 -2M1510 190q10 20 28 8M1515 215q15 25 30 10M1430 260q10 15 20 0M1325 75L1365 105L1325 142L1290 110Z',
      'M328 655L380 675L333 705ZM455 690L520 635L490 605Q455 600 452 630L475 655M440 960H578M440 960L450 1110M578 960L568 1110M460 915v45M560 915l-5 45',
    ],
    stamps: [[SPARK, 682, 255, 15], [PLUS, 384, 534, 55]],
    labels: [],
  },
];

const TILE_OFFSETS = [
  [-891, 0],
  [0, 0],
  [891, 0],
  [-891, 1584],
  [0, 1584],
  [891, 1584],
];

function Wallpaper() {
  return (
    <svg aria-hidden="true" className="absolute left-0 top-0 h-full w-full" fill="none" stroke="#20272b" strokeWidth="2.4" strokeLinecap="round" strokeLinejoin="round">
      <defs>
        <g id="doodles">
          {SHEETS.map((sheet) => (
            <g key={sheet.transform} transform={sheet.transform}>
              {sheet.circles.map(([x, y, r = 15]) => (
                <circle key={`${x}-${y}-${r}`} cx={x} cy={y} r={r} vectorEffect="non-scaling-stroke" />
              ))}
              {sheet.paths.map((d) => (
                <path key={d} d={d} vectorEffect="non-scaling-stroke" />
              ))}
              {sheet.stamps.map(([d, x, y, angle]) => (
                <path key={`${x}-${y}`} d={d} transform={`translate(${x} ${y}) rotate(${angle})`} vectorEffect="non-scaling-stroke" />
              ))}
              {sheet.labels.map(([text, x, y, size, angle]) => (
                <text key={text} x={x} y={y} fontSize={size} strokeWidth="2" textAnchor="middle" transform={`rotate(${angle} ${x} ${y})`} className="font-['Lato',sans-serif] font-bold" vectorEffect="non-scaling-stroke">
                  {text}
                </text>
              ))}
            </g>
          ))}
        </g>
      </defs>
      <g transform="translate(0 -229)">
        {TILE_OFFSETS.map(([x, y]) => (
          <use key={`${x}-${y}`} href="#doodles" x={x} y={y} />
        ))}
      </g>
    </svg>
  );
}

// Pixelated block that hides part of a number.
function Redacted({ shades, columns, cell, className }) {
  const rows = Math.ceil(shades.length / columns);
  return (
    <svg aria-label="Oculto" role="img" className={className} viewBox={`0 0 ${columns * cell} ${rows * cell}`} preserveAspectRatio="none" shapeRendering="crispEdges">
      {shades.map((shade, i) => (
        <rect key={i} x={(i % columns) * cell} y={Math.floor(i / columns) * cell} width={cell} height={cell} fill={shade} />
      ))}
    </svg>
  );
}

const AREA_SHADES = ['#4b4f52', '#5a5e61', '#55595c', '#606467', '#3c4144', '#2f3437', '#4f5356', '#44494c', '#55595c', '#3a3f42', '#34393c', '#4b4f52'];
const PREFIX_SHADES = [
  '#5f6366', '#6b6f72', '#55595c', '#66696c', '#55595c', '#43484b',
  '#6b6f72', '#4b4f52', '#777a7d', '#8a8d8f', '#5f6366', '#4b4f52',
  '#5a5e61', '#777a7d', '#5f6366', '#66696c', '#6b6f72', '#3c4144',
];
const CARD_SHADES = [
  '#4c5154', '#6a6e70', '#3d4245', '#55595c', '#6d7173', '#5d6163', '#8b8e90', '#7d8082', '#565a5d',
  '#6d7173', '#8b8e90', '#4c5154', '#3d4245', '#7d8082', '#6a6e70', '#55595c', '#7d8082', '#6a6e70',
  '#5d6163', '#7d8082', '#3d4245', '#4c5154', '#2f3538', '#6a6e70', '#8b8e90', '#6d7173', '#5d6163',
];

const CardNumber = () => (
  <span className="flex items-center">
    4152 314
    <Redacted shades={CARD_SHADES} columns={9} cell={8} className="mr-1 h-[21px] w-16" />
    8599
  </span>
);

const MESSAGES = [
  { lines: ['??'], time: '10:38 a. m.' },
  { out: true, lines: ['Si, en eso estoy'], time: '10:39 a. m.' },
  { lines: ['Ok'], time: '11:13 a. m.' },
  { lines: ['Platíqueme será transferencia o depósito?'], time: '12:21 p. m.' },
  { out: true, lines: ['Se me hace que deposito.'], time: '12:21 p. m.' },
  { lines: ['En Oxxo?'], time: '12:22 p. m.' },
  { out: true, lines: ['Si.'], time: '12:22 p. m.' },
  { lines: ['Ya le hago llegar la cuenta'], time: '12:22 p. m.' },
  { lines: ['Esto podría quedar hoy mismo hija mía?'], time: '12:22 p. m.' },
  { out: true, lines: ['Para mañana. Si consigo hoy será poco.'], time: '12:23 p. m.' },
  { lines: ['Sale'], time: '12:23 p. m.' },
  { lines: ['Quedó al pendiente'], time: '12:23 p. m.' },
  { out: true, lines: ['Gracias.'], time: '12:23 p. m.' },
  { lines: ['Eduviges Zaray Aguilar Ramírez', <CardNumber key="card" />, 'BBVA'], time: '1:42 p. m.' },
  { out: true, lines: ['¿Despues de entregarle el dinero ya no hace falta nada?'], time: '2:15 p. m.' },
  { lines: ['No mija ya con eso'], time: '2:26 p. m.' },
  { out: true, lines: ['Va'], time: '2:27 p. m.' },
  { out: true, lines: ['¿Mañana hasta el medio día verdad?'], time: '5:02 p. m.' },
  { lines: ['Claramente'], time: '5:41 p. m.' },
  { lines: ['Si es antes mejor'], time: '5:45 p. m.' },
  { out: true, lines: [], wide: true },
];

function Ticks() {
  return (
    <svg className="ml-[10px] h-[26px] w-10 shrink-0" viewBox="0 0 40 26" fill="none" stroke="#a3bdb0" strokeWidth="3.6" strokeLinecap="round" strokeLinejoin="round" role="img" aria-label="Leído">
      <path d="M2 16L10.500 24L26 2" />
      <path d="M18.500 21.500L22 24L38 2" />
    </svg>
  );
}

function Message({ message, first }) {
  const { out, lines, time, wide } = message;
  return (
    <li className={`flex ${out ? 'justify-end' : 'justify-start'} ${first ? 'mt-6' : 'mt-[6px]'}`}>
      <div
        className={`relative flex min-h-[74px] items-end rounded-[28px] ${out ? 'bg-[#144d37] pl-6 pr-[22px]' : 'bg-[#1f272a] pl-6 pr-[21px]'} ${first && out ? 'rounded-tr-none' : ''} ${first && !out ? 'rounded-tl-none' : ''} ${wide ? 'w-[86%]' : ''}`}
      >
        {first ? (
          <svg aria-hidden="true" className={`absolute top-0 h-[22px] w-[17px] ${out ? '-right-[17px] -scale-x-100 text-[#144d37]' : '-left-[17px] text-[#1f272a]'}`} viewBox="0 0 17 22" fill="currentColor">
            <path d="M17 0H4C0 0 -1 4 2 7L17 22Z" />
          </svg>
        ) : null}
        <div className="py-[17px] text-[23px] leading-10 text-[#f3f5f6]">
          {lines.map((line, i) => (
            <div key={i} className="whitespace-nowrap">{line}</div>
          ))}
        </div>
        {time ? (
          <div className={`flex items-end pb-3 text-[19px] leading-6 ${out ? 'ml-[22px] text-[#8fb0a2]' : 'ml-9 text-[#8d9598]'}`}>
            <time className="whitespace-nowrap">{time}</time>
            {out ? (
              <span className="pb-1">
                <Ticks />
              </span>
            ) : null}
          </div>
        ) : null}
      </div>
    </li>
  );
}

function StatusBar() {
  return (
    <div className="flex h-24 items-center justify-between px-[60px] pt-[26px] text-xl text-white">
      <span>2:29</span>
      <div className="flex items-center">
        <div className="relative font-['Roboto',sans-serif] text-[13px] font-bold leading-[13px]">
          <div>Vo</div>
          <div>LTE</div>
          <svg className="absolute -right-px top-0 h-3 w-2" viewBox="0 0 8 12" fill="none" stroke="#fff" strokeWidth="1.400" aria-hidden="true">
            <path d="M1 3q2 3 0 6M4 1q3.500 5 0 10" />
          </svg>
        </div>
        <svg className="ml-2 h-[26px] w-[30px]" viewBox="0 0 30 26" fill="none" stroke="#fff" strokeWidth="3" aria-hidden="true">
          <path d="M1.500 7.500C9 0 21 0 28.500 7.500M6 12.500C11 7.500 19 7.500 24 12.500M11 17C13.500 14.500 17 14.500 19.500 17" />
          <path d="M15 25.500L11.500 21.500H18.500ZM3.500 25.500L0.500 21H6.500ZM3.500 14.500L0.500 18.500H6.500Z" fill="#fff" stroke="none" />
        </svg>
        <svg className="ml-[14px] h-[26px] w-[29px]" viewBox="0 0 29 26" aria-hidden="true">
          <path d="M1 20.500h4v5H1zM9 14h4v11.500H9z" fill="#fff" />
          <path d="M17 7h4v18.500h-4zM24.500 0.500h4v25h-4z" fill="#6b6f71" />
        </svg>
        <svg className="ml-4 h-[30px] w-[15px]" viewBox="0 0 15 30" aria-hidden="true">
          <path d="M5 0h5l1 1.500C14 2 15 4 15 6v3.500H0V6C0 4 1 2 4 1.500Z" fill="#85898b" />
          <path d="M0 9.500h15V28q0 2-2 2H2q-2 0-2-2Z" fill="#fff" />
        </svg>
        <span className="ml-[10px] text-[19px]">74%</span>
      </div>
    </div>
  );
}

function ChatHeader() {
  return (
    <div className="flex h-[132px] items-center pl-10 pr-[50px] text-[#f5f7f8]">
      <button type="button" aria-label="Atrás">
        <svg className="h-10 w-10" viewBox="0 0 40 40" fill="none" stroke="currentColor" strokeWidth="4.800">
          <path d="M39.500 20H4M22 2L4 20L22 38" />
        </svg>
      </button>
      <div className="ml-[50px] flex h-[88px] w-[88px] items-center justify-center rounded-full bg-[#321622] text-[26px] text-[#f08a96]">M</div>
      <h1 className="ml-8 flex items-center text-[26px] leading-10">
        +52
        <Redacted shades={AREA_SHADES} columns={4} cell={9} className="ml-2 h-[23px] w-9" />
        <Redacted shades={PREFIX_SHADES} columns={6} cell={9} className="mx-[9px] h-[23px] w-[54px]" />
        7832
      </h1>
      <button type="button" aria-label="Llamar" className="ml-auto">
        <svg className="h-[46px] w-[46px]" viewBox="3 3 18 18" fill="currentColor">
          <path d="M6.540 5c.06.89.21 1.760.45 2.590l-1.200 1.200c-.41-1.200-.67-2.470-.76-3.790h1.510m9.860 12.020c.85.240 1.720.390 2.600.450v1.490c-1.320-.09-2.590-.35-3.800-.75l1.200-1.190M7.500 3H4c-.55 0-1 .45-1 1 0 9.390 7.610 17 17 17 .55 0 1-.45 1-1v-3.490c0-.55-.45-1-1-1-1.240 0-2.450-.2-3.570-.57-.1-.04-.21-.05-.31-.05-.26 0-.51.1-.71.29l-2.200 2.200c-2.830-1.450-5.150-3.760-6.590-6.590l2.200-2.200c.28-.28.36-.67.25-1.020C8.700 6.450 8.500 5.250 8.500 4c0-.55-.45-1-1-1z" />
        </svg>
      </button>
      <button type="button" aria-label="Opciones de llamada" className="ml-7">
        <svg className="h-[14px] w-5" viewBox="0 0 20 14" fill="currentColor">
          <path d="M2 0.500H18Q21 1.500 19 4L12 12Q10 14 8 12L1 4Q-1 1.500 2 0.500Z" />
        </svg>
      </button>
      <button type="button" aria-label="Más opciones" className="ml-[50px]">
        <svg className="h-10 w-[11px]" viewBox="0 0 11 40" fill="currentColor">
          <circle cx="5.500" cy="5" r="5" />
          <circle cx="5.500" cy="20" r="5" />
          <circle cx="5.500" cy="35" r="5" />
        </svg>
      </button>
    </div>
  );
}

export default function App() {
  return (
    <div className="flex h-screen flex-col overflow-hidden bg-[#0b1014] font-['Lato',sans-serif]">
      <header className="shrink-0 border-b border-[#1d2327]">
        <StatusBar />
        <ChatHeader />
      </header>

      <main className="relative min-h-0 flex-1 overflow-hidden">
        <Wallpaper />
        <ol className="relative -mt-[39px] flex flex-col pl-[42px] pr-[41px]">
          {MESSAGES.map((message, i) => (
            <Message key={i} message={message} first={i > 0 && Boolean(MESSAGES[i - 1].out) !== Boolean(message.out)} />
          ))}
        </ol>
        <div className="absolute left-1/2 top-[5px] flex h-[61px] w-[103px] -translate-x-1/2 items-center justify-center rounded-[18px] bg-[#12181c] pt-2 text-lg text-[#8b9397]">Viernes</div>
        <div className="absolute right-0 top-[150px] h-[92px] w-[10px] bg-[#3c4144]" />
        <button type="button" aria-label="Ir al final" className="absolute bottom-10 right-[31px] flex h-[79px] w-[79px] items-center justify-center rounded-full bg-[#28343b] shadow-lg shadow-black/50">
          <svg className="mt-1 h-8 w-7" viewBox="0 0 28 32" fill="none" stroke="#9aa3a7" strokeWidth="4.500" strokeLinecap="round" strokeLinejoin="round">
            <path d="M3 3L14 14L25 3M3 18L14 29L25 18" />
          </svg>
        </button>
      </main>

      <footer className="shrink-0 border-t border-[#1d2327]">
        <div className="grid grid-cols-2 pt-[50px] text-[23px] leading-[60px]">
          <button type="button" className="flex items-center justify-center text-[#f15c6d]">
            <svg className="mr-7 h-[35px] w-[30px]" viewBox="0 0 30 35" fill="none" stroke="currentColor" strokeWidth="4" strokeLinejoin="round" aria-hidden="true">
              <path d="M3.500 4V32.500H26.500V4" />
              <path d="M0.500 3.500H29.500" strokeLinecap="round" />
              <path d="M10 1.500H20M11.500 11V25M18.500 11V25" strokeWidth="3.500" strokeLinecap="round" />
            </svg>
            Eliminar chat
          </button>
          <button type="button" className="flex items-center justify-center text-[#2fbe68]">
            <svg className="mr-6 h-[38px] w-[38px]" viewBox="0 0 38 38" fill="none" stroke="currentColor" strokeWidth="4" aria-hidden="true">
              <circle cx="19" cy="19" r="16.500" />
              <path d="M7.500 7.500L30.500 30.500" />
            </svg>
            Desbloquear
          </button>
        </div>
        <div className="flex justify-center pb-6 pt-[74px]">
          <div className="h-[10px] w-[268px] rounded-full bg-[#ebebeb]" />
        </div>
      </footer>
    </div>
  );
}
